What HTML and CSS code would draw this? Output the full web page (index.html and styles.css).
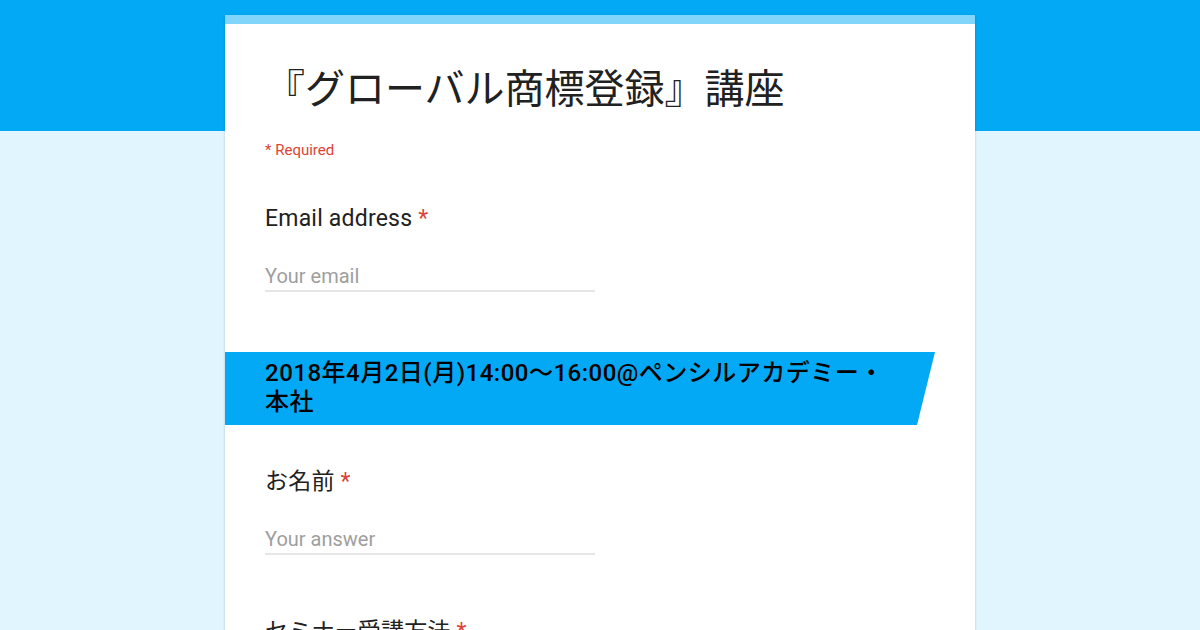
FILE: index.html
```html
<!DOCTYPE html>
<html lang="ja">
<head>
<meta charset="utf-8">
<title>『グローバル商標登録』講座</title>
<link rel="stylesheet" href="styles.css">
</head>
<body>
<main class="card">
  <header class="head">
    <h1 class="title">『グローバル商標登録』講座</h1>
    <div class="req-note">* Required</div>
  </header>
  <div class="item item-first">
    <div class="label">Email address <span class="star">*</span></div>
    <div class="input">Your email</div>
  </div>
  <div class="section">
    <div class="section-title">2018年4月2日(月)14:00～16:00@ペンシルアカデミー・本社</div>
  </div>
  <div class="item item-after-section">
    <div class="label">お名前 <span class="star">*</span></div>
    <div class="input">Your answer</div>
  </div>
  <div class="item item-next">
    <div class="label">セミナー受講方法 <span class="star">*</span></div>
  </div>
</main>
</body>
</html>
```
FILE: styles.css
```css
html, body {
  margin: 0;
  padding: 0;
}
body {
  background: linear-gradient(to bottom, #03a9f4 0, #03a9f4 131px, #e1f5fe 131px, #e1f5fe 100%);
  min-height: 630px;
  font-family: Roboto, "Noto Sans CJK JP", sans-serif;
  color: #212121;
  overflow: hidden;
}
.card {
  width: 750px;
  margin: 15px auto 0;
  background: #fff;
  border-top: 9px solid #81d4fa;
  box-shadow: 0 2px 1px -1px rgba(0,0,0,.2), 0 1px 1px 0 rgba(0,0,0,.14), 0 1px 3px 0 rgba(0,0,0,.12);
  padding-bottom: 200px;
}
.head {
  padding: 38px 40px 0;
}
.title {
  margin: 0;
  font-family: "Noto Sans CJK JP", sans-serif;
  font-weight: 400;
  font-size: 40px;
  line-height: 48px;
  color: #212121;
}
.req-note {
  margin-top: 30px;
  font-size: 15px;
  line-height: 20px;
  color: #db4437;
}
.item {
  padding: 0 40px;
}
.item-first {
  margin-top: 44px;
}
.label {
  font-size: 23px;
  line-height: 30px;
  letter-spacing: 0.2px;
  color: #212121;
}
.star {
  color: #db4437;
}
.input {
  width: 330px;
  margin-top: 30px;
  font-size: 20px;
  line-height: 24px;
  color: #9e9e9e;
  padding-bottom: 2px;
  border-bottom: 2px solid #e6e6e6;
}
.section {
  margin-top: 60px;
  width: 710px;
  background: #03a9f4;
  clip-path: polygon(0 0, 100% 0, calc(100% - 18px) 100%, 0 100%);
  padding: 7px 45px 8px 40px;
  box-sizing: border-box;
}
.section-title {
  font-size: 24px;
  line-height: 29px;
  font-weight: 500;
  letter-spacing: 0.5px;
  color: #000;
}
.item-after-section {
  margin-top: 42px;
}
.item-next {
  margin-top: 62px;
}
```
